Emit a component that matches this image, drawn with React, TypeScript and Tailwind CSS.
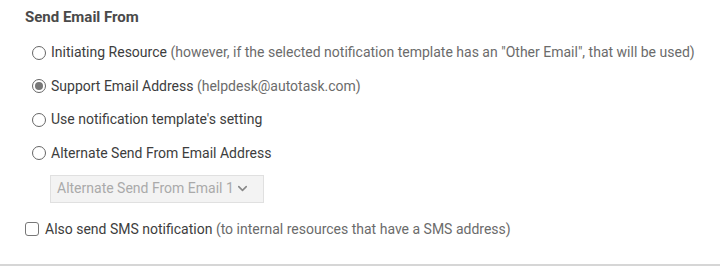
import { ChevronDown } from 'lucide-react';

function Radio({ checked }: { checked?: boolean }) {
  return (
    <span className="w-[14px] h-[14px] rounded-full border border-[#666] flex items-center justify-center shrink-0">
      {checked && <span className="w-[8px] h-[8px] rounded-full bg-[#777]" />}
    </span>
  );
}

const options = [
  { label: 'Initiating Resource', note: '(however, if the selected notification template has an "Other Email", that will be used)' },
  { label: 'Support Email Address', note: '(helpdesk@autotask.com)', checked: true },
  { label: "Use notification template's setting" },
  { label: 'Alternate Send From Email Address' },
];

export default function App() {
  return (
    <div className="w-[720px] h-[267px] bg-white font-['Roboto',sans-serif] text-[#444] flex flex-col">
      <div className="flex-1 pl-[25px]">
        <h3 className="text-[15px] font-bold text-[#4a4a4a] pt-[8px] leading-[18px]">Send Email From</h3>
        <div className="pl-[7px] pt-[18px] flex flex-col gap-[16.5px]">
          {options.map((o, i) => (
            <label key={i} className="flex items-center gap-[5px] h-[17px] text-[14px]">
              <Radio checked={o.checked} />
              <span className="text-[#3d3d3d]">
                {o.label}
                {o.note && <span className="text-[#6b6b6b]"> {o.note}</span>}
              </span>
            </label>
          ))}
        </div>
        <div className="ml-[25px] mt-[13px] w-[214px] h-[28px] border border-[#e0e0e0] bg-[#f3f3f3] flex items-center pl-[6px] text-[14px] text-[#aaa]">
          <span>Alternate Send From Email 1</span>
          <ChevronDown className="w-[15px] h-[15px] ml-[1px] text-[#888]" strokeWidth={2.5} />
        </div>
        <label className="flex items-center gap-[6px] mt-[18px] h-[17px] text-[14px]">
          <span className="w-[14px] h-[14px] rounded-[3px] border border-[#777] shrink-0" />
          <span className="text-[#3d3d3d]">
            Also send SMS notification
            <span className="text-[#6b6b6b]"> (to internal resources that have a SMS address)</span>
          </span>
        </label>
      </div>
      <div className="h-[2px] bg-[#d6d6d6] mb-[1px]" />
    </div>
  );
}
